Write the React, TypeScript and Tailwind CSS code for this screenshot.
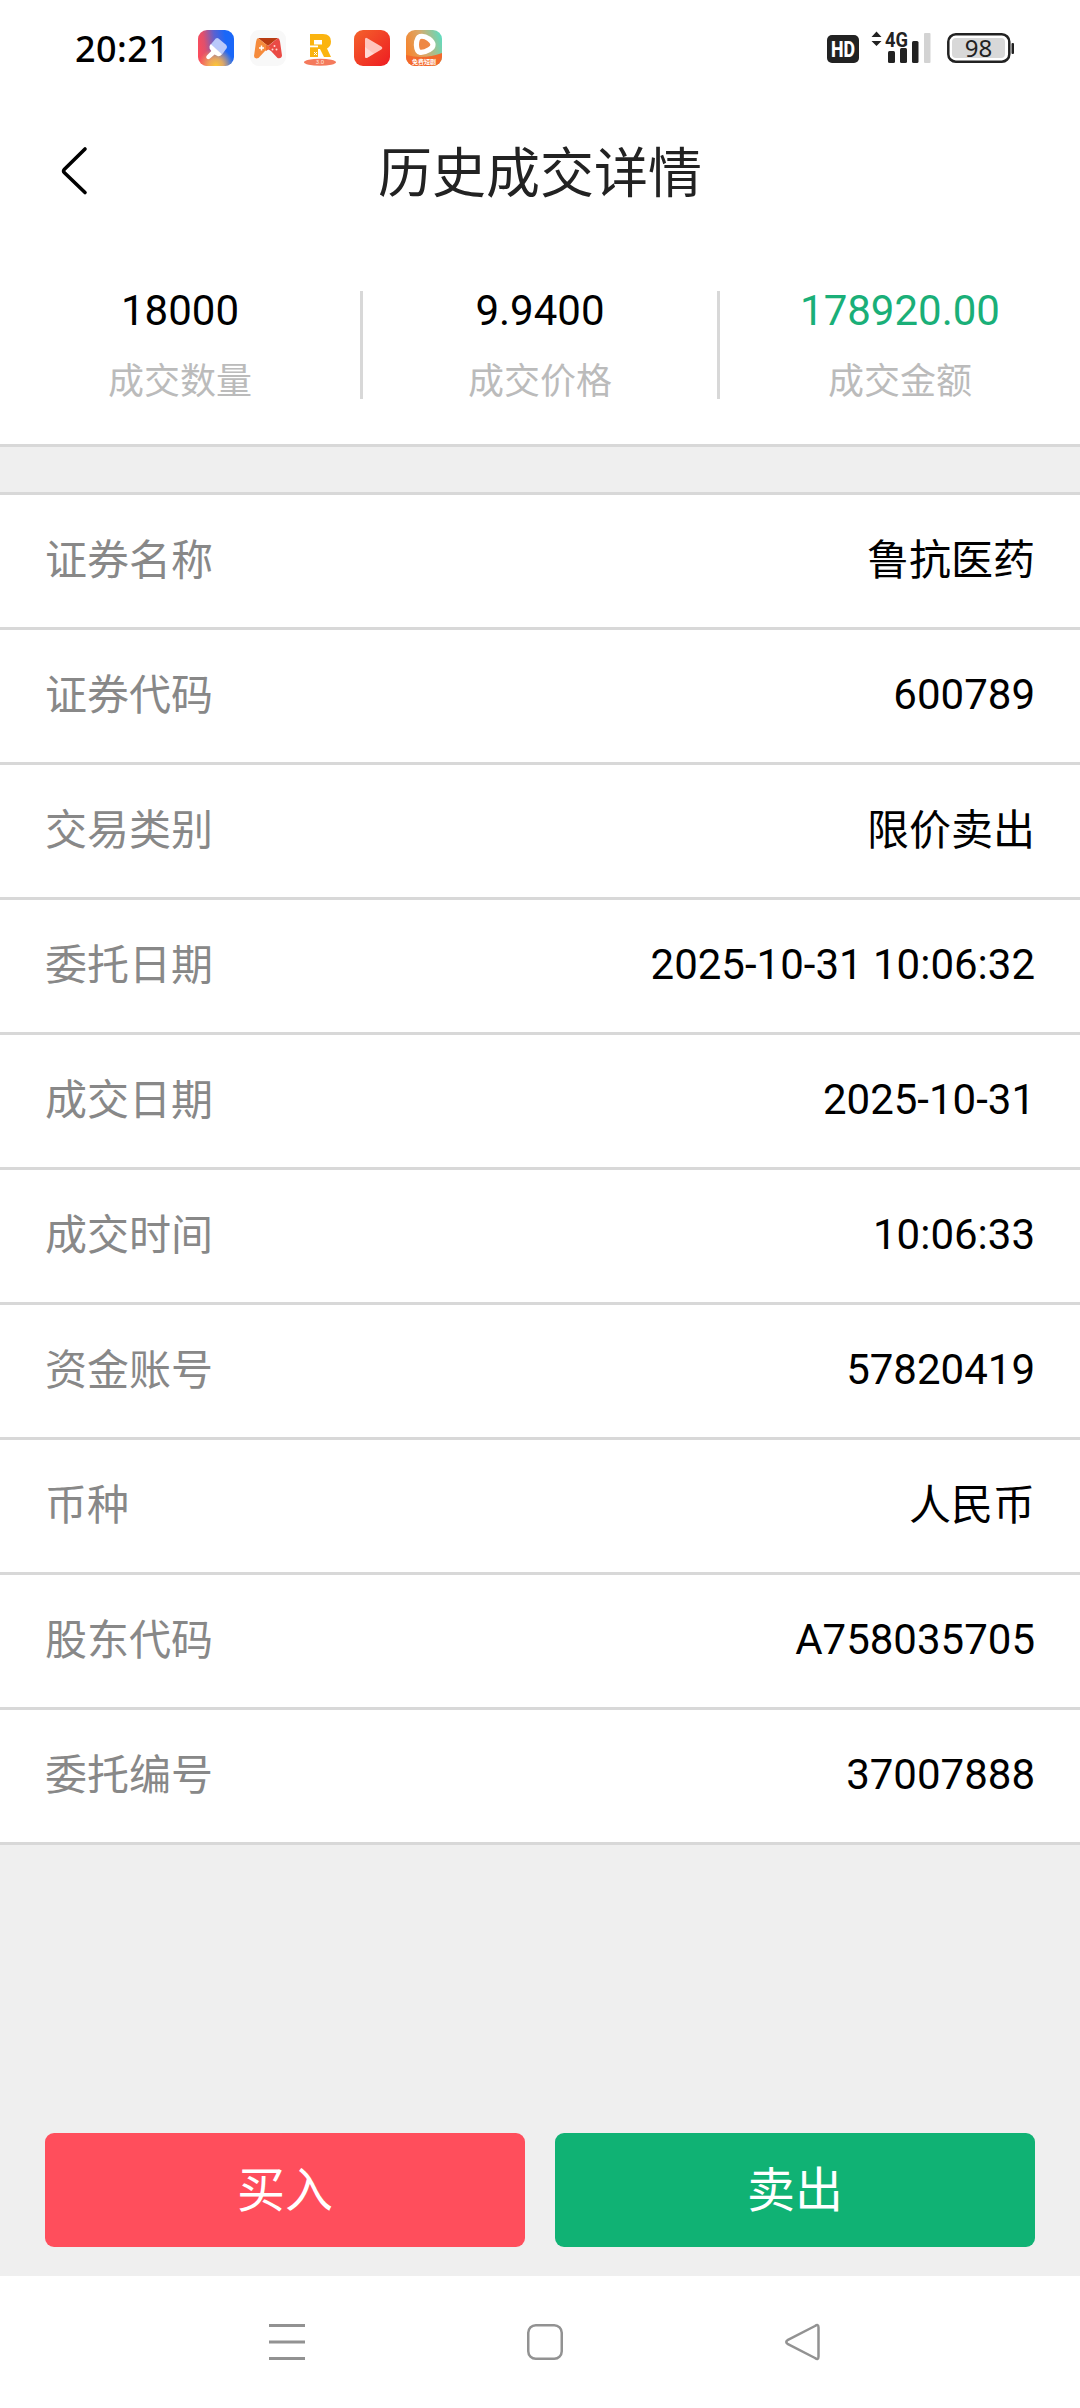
import { ReactNode } from 'react';

const summary = [
  { label: "成交数量", value: "18000", color: "text-black" },
  { label: "成交价格", value: "9.9400", color: "text-black" },
  { label: "成交金额", value: "178920.00", color: "text-[#1aaf78]" },
];

const details = [
  { label: "证券名称", value: "鲁抗医药", cjk: true },
  { label: "证券代码", value: "600789" },
  { label: "交易类别", value: "限价卖出", cjk: true },
  { label: "委托日期", value: "2025-10-31 10:06:32" },
  { label: "成交日期", value: "2025-10-31" },
  { label: "成交时间", value: "10:06:33" },
  { label: "资金账号", value: "57820419" },
  { label: "币种", value: "人民币", cjk: true },
  { label: "股东代码", value: "A758035705" },
  { label: "委托编号", value: "37007888" },
];

function AppIcon({ children }: { children: ReactNode }) {
  return <svg width="36" height="36" viewBox="0 0 36 36">{children}</svg>;
}

function StatusBar() {
  return (
    <div className="h-[96px] flex items-center justify-between pl-[75px] pr-[66px]">
      <div className="flex items-center">
        <span className="w-[123px] text-[36px] leading-[36px] pt-[2px] font-medium text-black tracking-[0.4px] font-['Noto_Sans',sans-serif]">20:21</span>
        <div className="flex gap-4">
          {/* theme brush */}
          <AppIcon>
            <defs>
              <linearGradient id="brushBg" x1="0" y1="0.55" x2="1" y2="0.4">
                <stop offset="0" stopColor="#fb4c5c" />
                <stop offset="0.2" stopColor="#e0506c" />
                <stop offset="0.5" stopColor="#5a62d0" />
                <stop offset="0.8" stopColor="#1a67f8" />
              </linearGradient>
              <radialGradient id="brushGlow" cx="0.5" cy="1" r="0.5">
                <stop offset="0" stopColor="#ffc830" />
                <stop offset="0.4" stopColor="#f9b552" stopOpacity="0.85" />
                <stop offset="1" stopColor="#f9b552" stopOpacity="0" />
              </radialGradient>
            </defs>
            <rect width="36" height="36" rx="9" fill="url(#brushBg)" />
            <rect width="36" height="36" rx="9" fill="url(#brushGlow)" />
            <path d="M17.500 8.800q1.500-1.300 3-.4l7.500 6.300q1.400 1.400.8 3.300L24 24.500 12.800 14.500z" fill="#b9c9fa" />
            <path d="M12.800 14l11.200 10.200q-1.800 2.300-4 2l-3.400-1.700-5 4.300q-1.600 1-2.900-.3-1.300-1.500.2-3l4.400-4.500-1.700-2.600q-.8-2.400 1.200-4.400z" fill="#fff" />
          </AppIcon>
          {/* game center */}
          <AppIcon>
            <rect width="36" height="36" rx="9" fill="#f8f8f8" />
            <path d="M8 8h20l-10 8z" fill="#b93c12" />
            <path d="M28 8L16 18l5 3 6.500 7q4 1 4.500-2.500l-2-14q-.5-3-2-3.500z" fill="#ea4a45" />
            <path d="M8 8l12.500 10-5.500 3-6.500 7q-4 1.500-4.500-2l2-14q.5-3.500 2-4z" fill="#f58b3c" />
            <path d="M16 14.500l4.500 3.500-4.500 3z" fill="#ee6a35" />
            <path d="M11.500 15.500v5M9 18h5" stroke="#fff" strokeWidth="1.500" />
            <circle cx="24.500" cy="16" r="1" fill="#ffd9d0" />
            <circle cx="22.500" cy="19.500" r="1" fill="#ffd9d0" />
            <circle cx="26.500" cy="19.500" r="1" fill="#ffd9d0" />
          </AppIcon>
          {/* R 3.0 */}
          <AppIcon>
            <path fillRule="evenodd" d="M8 4h13q8 0 8 7.500 0 5-4 7l4 8.500h-7l-4-8h-2v8H8zM12 10v4.500h8V10z" fill="#fbb40f" />
            <path d="M8 15.500h8v1.800H8z" fill="#fff" />
            <path d="M12 22l3 3M15 22l-3 3" stroke="#fff" strokeWidth="1" />
            <ellipse cx="18" cy="32.300" rx="16" ry="3.500" fill="#f47a5c" />
            <text x="18" y="34.300" textAnchor="middle" fontSize="6" fill="#ffe4dc" className="font-['Roboto',sans-serif]">3.0</text>
          </AppIcon>
          {/* video */}
          <AppIcon>
            <defs>
              <linearGradient id="videoBg" x1="0" y1="0" x2="1" y2="1">
                <stop offset="0" stopColor="#f4622b" />
                <stop offset="1" stopColor="#ee1c22" />
              </linearGradient>
            </defs>
            <rect width="36" height="36" rx="9" fill="url(#videoBg)" />
            <path d="M11 9.500q0-2.500 2.300-1.300l14 8.300q2 1.500 0 3l-14 8.300q-2.300 1-2.300-1.300z" fill="#ffc5bd" />
            <path d="M11 17l9 6.700-6.700 4.100q-2.300 1-2.300-1.300z" fill="#fff" fillOpacity="0.350" />
          </AppIcon>
          {/* short drama */}
          <AppIcon>
            <defs>
              <linearGradient id="dramaBg" x1="0" y1="0.500" x2="1" y2="0.200">
                <stop offset="0" stopColor="#f5852f" />
                <stop offset="0.450" stopColor="#dba868" />
                <stop offset="1" stopColor="#5fdcc0" />
              </linearGradient>
              <clipPath id="dramaClip"><rect width="36" height="36" rx="9" /></clipPath>
            </defs>
            <g clipPath="url(#dramaClip)">
              <rect width="36" height="36" fill="url(#dramaBg)" />
              <path d="M0 25q18 5 36-2v13H0z" fill="#f3692c" />
            </g>
            <path d="M14 6.500q4-1 9 2.300 4 3 4 6 0 3-4 5-5 3-9 2.500-3.300-1-3.600-7.500.300-7.300 3.600-8.300z" fill="#ee8844" stroke="#fff" strokeWidth="5.200" strokeLinejoin="round" />
            <text x="18" y="33.500" textAnchor="middle" fontSize="6" fontWeight="700" fill="#fff" className="font-['Noto_Sans_CJK_SC',sans-serif]">免费短剧</text>
          </AppIcon>
        </div>
      </div>

      <svg width="187" height="60" viewBox="0 -12 187 60" className="font-['Roboto',sans-serif]">
        <rect x="0" y="5" width="32" height="28" rx="5" fill="#222" />
        <text x="16" y="27" textAnchor="middle" fontSize="22" fontWeight="800" fill="#fff" textLength="24" lengthAdjust="spacingAndGlyphs">HD</text>
        <path d="M44.500 7l5-5.500 5 5.500zM44.500 11l5 5 5-5z" fill="#222" />
        <text x="58" y="16.500" fontSize="21" fontWeight="700" fill="#222" textLength="23" lengthAdjust="spacingAndGlyphs">4G</text>
        <rect x="61" y="21" width="7" height="12" rx="1.500" fill="#222" />
        <rect x="73" y="18" width="7" height="15" rx="1.500" fill="#222" />
        <rect x="85" y="11" width="6.500" height="22" rx="1.500" fill="#222" />
        <rect x="97" y="3" width="6.500" height="30" rx="1" fill="#d3d3d3" />
        <rect x="121.300" y="4.300" width="61" height="27.400" rx="7.500" fill="#fff" stroke="#222" strokeWidth="2.500" />
        <rect x="125" y="8" width="53" height="20" rx="4" fill="#d8d8d8" />
        <rect x="184.500" y="13" width="2.500" height="11" rx="1" fill="#222" />
        <text x="151.500" y="26.500" textAnchor="middle" fontSize="24" fill="#222" className="font-['Noto_Sans',sans-serif]">98</text>
      </svg>
    </div>
  );
}

function Header() {
  return (
    <header className="relative h-[150px] flex items-center justify-center">
      <button className="absolute left-[60px] top-[50px]">
        <svg width="28" height="50" viewBox="0 0 28 50" fill="none" stroke="#000" strokeWidth="3.600" strokeLinecap="round" strokeLinejoin="round">
          <path d="M25 3L4.200 23.500q-1.200 1.500 0 3L25 46.500" />
        </svg>
      </button>
      <h1 className="pt-[8px] text-[54px] leading-[60px] text-[#222]">历史成交详情</h1>
    </header>
  );
}

export default function TradeDetail() {
  return (
    <div className="w-[1080px] h-[2408px] bg-[#efefef] flex flex-col font-['Roboto','Noto_Sans_CJK_SC',sans-serif]">
      <div className="h-[447px] bg-white border-b-[3px] border-[#d8d8d8]">
        <StatusBar />
        <Header />
        <div className="mt-[45px] h-[108px] grid grid-cols-3">
          {summary.map((item, i) => (
            <div key={item.label} className={`flex flex-col items-center ${i === 1 ? 'border-x-[3px] border-[#d8d8d8]' : ''}`}>
              <span className={`text-[42px] leading-[40px] ${item.color}`}>{item.value}</span>
              <span className="mt-[34px] text-[36px] leading-[34px] text-[#bbb]">{item.label}</span>
            </div>
          ))}
        </div>
      </div>

      <div className="mt-[45px] bg-white border-t-[3px] border-[#d8d8d8]">
        {details.map(row => (
          <div key={row.label} className="h-[135px] px-[45px] pb-[3px] flex items-center justify-between border-b-[3px] border-[#d8d8d8] text-[42px] leading-[60px]">
            <span className="pt-[3px] text-[#888]">{row.label}</span>
            <span className={`text-black ${row.cjk ? 'pt-[3px]' : ''}`}>{row.value}</span>
          </div>
        ))}
      </div>

      <div className="mt-auto mb-[29px] px-[45px] flex gap-[30px] text-[48px] leading-[60px] text-white">
        <button className="flex-1 h-[114px] pt-[2px] rounded-[9px] bg-[#ff4e5c]">买入</button>
        <button className="flex-1 h-[114px] pt-[2px] rounded-[9px] bg-[#10b274]">卖出</button>
      </div>

      <nav className="h-[132px] bg-white shrink-0 flex pl-[268px] pt-[47px] gap-[220px]">
        <svg width="38" height="38" viewBox="0 0 38 38" stroke="#929292" strokeWidth="3">
          <path d="M1 2.500h36M1 19h36M1 35.500h36" />
        </svg>
        <svg width="38" height="38" viewBox="0 0 38 38" fill="none" stroke="#929292" strokeWidth="2.500">
          <rect x="2.250" y="2.250" width="33.500" height="33.500" rx="7.500" />
        </svg>
        <svg width="38" height="38" viewBox="0 0 38 38" fill="none" stroke="#929292" strokeWidth="2.500" strokeLinejoin="round">
          <path d="M34.500 4.500v29q0 4-3.500 1.500L3.500 20.800q-2.500-1.800 0-3.600L31 3q3.500-2.500 3.500 1.500z" />
        </svg>
      </nav>
    </div>
  );
}
